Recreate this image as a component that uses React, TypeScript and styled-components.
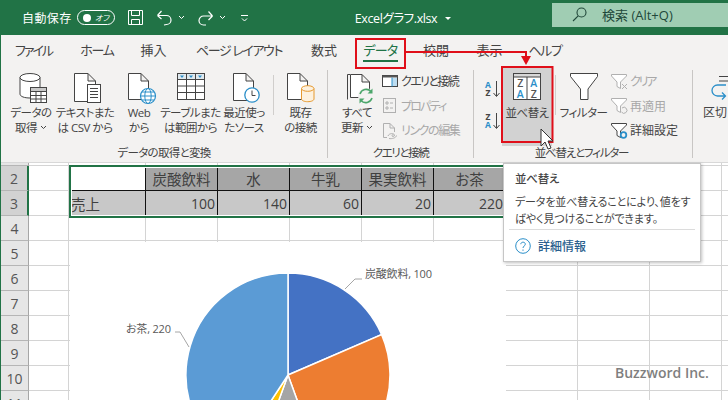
import React from "react";
import styled, { createGlobalStyle } from "styled-components";

const Global = createGlobalStyle`
  html, body { margin: 0; padding: 0; background: #fff; }
  #root { width: 728px; height: 400px; }
  * { box-sizing: border-box; }
`;

const font = `"Open Sans", "Noto Sans CJK JP", sans-serif`;

const Page = styled.div`
  position: relative;
  width: 728px;
  height: 400px;
  overflow: hidden;
  font-family: ${font};
  font-feature-settings: "palt";
  color: #444;
  background: #fff;
`;

/* ---------- title bar ---------- */
const TitleBar = styled.header`
  display: flex;
  align-items: center;
  height: 35px;
  background: #217346;
  color: #fff;
`;
const QuickAccess = styled.div`
  display: flex;
  align-items: center;
  width: 254px;
  padding-left: 22px;
  flex: none;
`;
const AutoSave = styled.span`
  font-size: 12px;
  width: 48px;
  white-space: nowrap;
  letter-spacing: 0.4px;
`;
const Toggle = styled.span`
  display: flex;
  align-items: center;
  justify-content: space-between;
  width: 38px;
  height: 15px;
  margin-left: 7px;
  padding: 0 5px 0 5px;
  border: 1px solid #fff;
  border-radius: 8px;
  font-size: 8px;
  font-style: italic;
  &::before {
    content: "";
    width: 8px;
    height: 8px;
    border-radius: 50%;
    background: #fff;
  }
`;
const QuickIcon = styled.svg<{ $gap: number }>`
  margin-left: ${(p) => p.$gap}px;
  flex: none;
  fill: none;
  stroke: #fff;
`;
const FileName = styled.div`
  flex: 1;
  display: flex;
  align-items: center;
  justify-content: center;
  gap: 8px;
  font-size: 12.5px;
  letter-spacing: -0.4px;
`;
const Caret = styled.span`
  border-left: 3px solid transparent;
  border-right: 3px solid transparent;
  border-top: 3px solid #fff;
  margin-top: 2px;
`;
const Search = styled.div`
  display: flex;
  align-items: center;
  width: 176px;
  height: 24px;
  margin-top: -6px;
  padding-left: 20px;
  background: #a0cdb3;
  color: #21483a;
  font-size: 13px;
  gap: 15px;
`;

/* ---------- tabs ---------- */
const Body = styled.div`
  border-left: 1px solid #217346;
`;
const Tabs = styled.nav`
  display: flex;
  height: 31px;
  background: #f3f2f1;
`;
const Tab = styled.div<{ $w: number; $track?: number }>`
  width: ${(p) => p.$w}px;
  text-align: center;
  padding-top: 7px;
  font-size: 13px;
  line-height: 16px;
  letter-spacing: ${(p) => p.$track ?? 0}px;
  color: #444;
  white-space: nowrap;
`;
const TabLabel = styled.span<{ $active?: boolean }>`
  display: inline-block;
  padding-bottom: 2px;
  border-bottom: 2px solid ${(p) => (p.$active ? "#217346" : "transparent")};
  ${(p) => (p.$active ? "color:#217346;" : "")}
`;

/* ---------- ribbon ---------- */
const Ribbon = styled.section`
  display: flex;
  height: 97px;
  background: #f3f2f1;
  border-bottom: 1px solid #d8d8d8;
`;
const Group = styled.div<{ $w: number }>`
  display: flex;
  flex-direction: column;
  flex: none;
  width: ${(p) => p.$w}px;
  overflow: hidden;
`;
const GroupDivider = styled.div`
  flex: none;
  width: 1px;
  height: 88px;
  margin-top: 4px;
  background: #c8c6c4;
`;
const Items = styled.div<{ $pad?: number }>`
  display: flex;
  height: 80px;
  flex: none;
  padding-left: ${(p) => p.$pad ?? 0}px;
`;
const GroupLabel = styled.div<{ $track: number; $shift?: number }>`
  text-align: center;
  font-size: 11.5px;
  line-height: 14px;
  letter-spacing: ${(p) => p.$track}px;
  padding-right: ${(p) => p.$shift ?? 0}px;
  color: #444;
  white-space: nowrap;
`;
const BigButton = styled.div<{ $w: number; $hot?: boolean }>`
  flex: none;
  width: ${(p) => p.$w}px;
  display: flex;
  flex-direction: column;
  align-items: center;
  padding-top: 6px;
  ${(p) => (p.$hot ? "background:#d2d2d2;" : "")}
`;
const BigIcon = styled.svg`
  width: 32px;
  height: 32px;
  flex: none;
  overflow: visible;
`;
const BigLabel = styled.div`
  margin-top: 1px;
  font-size: 11.5px;
  letter-spacing: -0.5px;
  line-height: 15px;
  text-align: center;
  white-space: nowrap;
`;
const Chevron = styled.svg`
  width: 7px;
  height: 5px;
  margin-left: 3px;
  fill: none;
  stroke: #444;
  vertical-align: 2px;
`;
const InnerDivider = styled.div<{ $left?: number }>`
  flex: none;
  width: 1px;
  height: 40px;
  margin-top: 9px;
  margin-left: ${(p) => p.$left ?? 0}px;
  background: #d0cecc;
`;
const SmallColumn = styled.div`
  display: flex;
  flex-direction: column;
  padding-top: 3px;
`;
const SmallRow = styled.div<{ $off?: boolean; $track?: number }>`
  display: flex;
  align-items: center;
  gap: 2px;
  height: 24.5px;
  font-size: 12px;
  letter-spacing: ${(p) => p.$track ?? 0}px;
  white-space: nowrap;
  color: ${(p) => (p.$off ? "#a8a8a8" : "#444")};
`;
const SmallIcon = styled.svg`
  width: 17px;
  height: 17px;
  flex: none;
  overflow: visible;
`;
const SortStack = styled.div`
  display: flex;
  flex-direction: column;
  width: 28px;
  padding: 14px 0 0 10px;
  gap: 14px;
  flex: none;
`;
const CutOffLabel = styled.div`
  margin-top: 1px;
  font-size: 12px;
  line-height: 15px;
  white-space: nowrap;
`;
const CutOffButton = styled.div`
  display: flex;
  flex-direction: column;
  width: 40px;
  padding-top: 6px;
`;

/* ---------- sheet ---------- */
const Sheet = styled.div`
  position: relative;
  display: grid;
  grid-template-columns: 28px 40px 77px repeat(9, 72px);
  grid-template-rows: 3px repeat(10, 25px);
  height: 237px;
  overflow: hidden;
  background: #fff;
`;
const RowHead = styled.div<{ $on?: boolean }>`
  display: flex;
  align-items: center;
  justify-content: center;
  font-size: 14px;
  color: #555;
  background: ${(p) => (p.$on ? "#d2d2d2" : "#e6e6e6")};
  border-bottom: 1px solid #b5b5b5;
  border-right: 1px solid ${(p) => (p.$on ? "#217346" : "#a6a6a6")};
  ${(p) => (p.$on ? "border-right-width:2px;" : "")}
`;
const toneBg = { plain: "#fff", head: "#a6a6a6", value: "#c8c8c8", corner: "#fff", label: "#c8c8c8" };
const Cell = styled.div<{ $tone: keyof typeof toneBg }>`
  display: flex;
  align-items: center;
  justify-content: ${(p) => (p.$tone === "head" ? "center" : p.$tone === "value" ? "flex-end" : "flex-start")};
  padding: 0 2px;
  overflow: hidden;
  font-size: ${(p) => (p.$tone === "value" ? 14 : 14.5)}px;
  white-space: nowrap;
  color: #404040;
  background: ${(p) => toneBg[p.$tone]};
  border-right: 1px solid ${(p) => (p.$tone === "plain" ? "#d4d4d4" : "#111")};
  border-bottom: 1px solid ${(p) => (p.$tone === "plain" ? "#d4d4d4" : "#111")};
`;
const Selection = styled.div`
  position: absolute;
  left: 68px;
  top: 2px;
  width: 440px;
  height: 53px;
  border: 2px solid #217346;
  box-shadow: inset 0 0 0 1px #fff;
  pointer-events: none;
`;
const Chart = styled.div`
  position: absolute;
  left: 69px;
  top: 79px;
  width: 436px;
  height: 170px;
  background: #fff;
`;
const ChartSvg = styled.svg`
  display: block;
  width: 436px;
  height: 170px;
`;
const Watermark = styled.div`
  position: absolute;
  left: 615px;
  top: 363px;
  font-size: 14px;
  line-height: 20px;
  color: #7f7f7f;
  font-weight: 600;
`;

/* ---------- tooltip ---------- */
const Tooltip = styled.aside`
  position: absolute;
  left: 503px;
  top: 163px;
  width: 198px;
  height: 99px;
  padding: 7px 5px 0;
  background: #fff;
  border: 1px solid #c6c6c6;
  box-shadow: 1px 1px 3px rgba(0, 0, 0, 0.25);
  color: #444;
`;
const TipTitle = styled.div`
  padding-left: 6px;
  font-size: 11.5px;
  line-height: 16px;
  letter-spacing: -0.3px;
  font-weight: 500;
`;
const TipText = styled.div`
  padding: 6px 6px 2px;
  font-size: 11px;
  line-height: 17px;
  letter-spacing: -0.15px;
  white-space: nowrap;
`;
const TipFoot = styled.div`
  display: flex;
  align-items: center;
  gap: 7px;
  padding: 7px 6px 0;
  border-top: 1px solid #dcdcdc;
  color: #2b5f8e;
  font-size: 12px;
  font-weight: 500;
`;

/* ---------- annotations ---------- */
const Overlay = styled.svg`
  position: absolute;
  left: 0;
  top: 0;
  width: 728px;
  height: 400px;
  pointer-events: none;
`;

/* ---------- icons ---------- */
const S = "#444";
const B = "#2b8fc9";

const Doc = ({ x, y, w, h }: { x: number; y: number; w: number; h: number }) => (
  <path
    d={`M${x + .5} ${y + .5}H${x + w - 8}L${x + w - .5} ${y + 8}V${y + h - .5}H${x + .5}ZM${x + w - 8} ${y + .5}V${y + 8}H${x + w - .5}`}
    fill="#fff"
    stroke={S}
  />
);

const GetDataIcon = () => (
  <BigIcon viewBox="0 0 32 32">
    <path d="M5 5.500V22c0 2.500 4.500 4 10 4s10-1.500 10-4V5.500" fill="#fff" stroke={S} />
    <ellipse cx="15" cy="5.500" rx="10" ry="4" fill="#fff" stroke={S} />
    <rect x="15.500" y="15.500" width="16" height="15" fill="#fff" stroke={S} />
    <path d="M15.500 19.500h16M15.500 23.500h16M15.500 27h16M21 19.500V30.500M26 19.500V30.500" stroke={S} fill="none" />
    <rect x="15.500" y="15.500" width="16" height="4" fill="#c9c9c9" stroke={S} />
  </BigIcon>
);
const TextCsvIcon = () => (
  <BigIcon viewBox="0 0 32 32">
    <Doc x={5} y={1} w={22} h={29} />
    <rect x="18.500" y="12.500" width="13" height="18" fill="#fff" stroke={S} />
    <path d="M21 16.500h8M21 19.500h8M21 22.500h8M21 25.500h8" stroke={S} fill="none" />
  </BigIcon>
);
const WebIcon = () => (
  <BigIcon viewBox="0 0 32 32">
    <Doc x={5} y={1} w={21} h={27} />
    <circle cx="25" cy="24" r="7.500" fill="#fff" stroke={B} strokeWidth="1.200" />
    <ellipse cx="25" cy="24" rx="3.200" ry="7.500" fill="none" stroke={B} />
    <path d="M17.500 24h15M18.800 20h12.400M18.800 28h12.400" stroke={B} fill="none" />
  </BigIcon>
);
const TableIcon = () => (
  <BigIcon viewBox="0 0 32 32">
    <rect x="2.500" y="1.500" width="27" height="26" fill="#fff" stroke={S} />
    <rect x="2.500" y="1.500" width="27" height="6" fill="#dfe9ef" stroke={S} />
    <path d="M2.500 14h27M2.500 20.500h27M11.500 1.500v26M20.500 1.500v26" stroke={S} fill="none" />
    <path d="M5 3.500h4L7 6zM14 3.500h4L16 6zM23 3.500h4L25 6z" fill={B} />
  </BigIcon>
);
const RecentIcon = () => (
  <BigIcon viewBox="0 0 32 32">
    <Doc x={5} y={1} w={21} h={28} />
    <circle cx="24" cy="23" r="7.200" fill="#fff" stroke={B} strokeWidth="1.300" />
    <path d="M24 18.500V23.500H27.500" fill="none" stroke={S} />
  </BigIcon>
);
const ExistingIcon = () => (
  <BigIcon viewBox="0 0 32 32">
    <Doc x={2} y={1} w={21} h={27} />
    <path d="M16.500 16.500V27c0 1.500 2.700 2.700 6.200 2.700s6.300-1.200 6.300-2.700V16.500" fill="#fdf1de" stroke="#e6992f" />
    <ellipse cx="22.700" cy="16.500" rx="6.200" ry="2.800" fill="#fdf1de" stroke="#e6992f" />
  </BigIcon>
);
const RefreshIcon = () => (
  <BigIcon viewBox="0 0 32 32">
    <path d="M6.500 27.500V2.500H9" fill="none" stroke={S} />
    <Doc x={9} y={2} w={20} h={24} />
    <circle cx="25" cy="24" r="8" fill="#f3f2f1" />
    <path d="M19 22a6.500 6.500 0 0 1 11-2.500M31 26a6.500 6.500 0 0 1-11 2.500" fill="none" stroke="#4ca66b" strokeWidth="1.600" />
    <path d="M31.500 16.500v5h-5zM18.500 31.500v-5h5z" fill="#4ca66b" />
  </BigIcon>
);
const SortIcon = () => (
  <BigIcon viewBox="0 0 32 32">
    <rect x="2.500" y="1.500" width="27" height="26" fill="#fff" stroke={S} />
    <rect x="2.500" y="1.500" width="27" height="3.500" fill="#d8d8d8" stroke={S} />
    <path d="M16 5v22.500" stroke={S} />
    <g fontSize="10.500" fontWeight="600" textAnchor="middle" fontFamily="Open Sans, sans-serif">
      <text x="9.300" y="15" fill="#555">Z</text>
      <text x="9.300" y="25.500" fill={B}>A</text>
      <text x="22.700" y="15" fill={B}>A</text>
      <text x="22.700" y="25.500" fill="#555">Z</text>
    </g>
  </BigIcon>
);
const FilterIcon = () => (
  <BigIcon viewBox="0 0 32 32">
    <path d="M2.500 1.500H29.500V4.500L20 17V27.500H12.500V17L2.500 4.500Z" fill="#fff" stroke={S} />
  </BigIcon>
);
const SortMini = ({ top, bottom }: { top: string; bottom: string }) => (
  <svg width="18" height="18" viewBox="0 0 18 18" style={{ overflow: "visible" }}>
    <g fontSize="8.500" fontWeight="700" textAnchor="middle" fontFamily="Open Sans, sans-serif">
      <text x="4" y="7.500" fill={top === "A" ? B : "#444"}>{top}</text>
      <text x="4" y="16" fill={bottom === "A" ? B : "#444"}>{bottom}</text>
    </g>
    <path d="M12.500 1V16M9.500 13l3 3.500 3-3.500" fill="none" stroke="#444" />
  </svg>
);
const QueryIcon = () => (
  <SmallIcon viewBox="0 0 17 17">
    <rect x="0.500" y="2.500" width="15" height="11" fill="#fff" stroke={S} />
    <path d="M.500 2.500h15v2h-15z" fill="#555" />
    <rect x="10" y="5" width="5" height="8" fill="#bcdcf0" />
    <path d="M10 4.500V13.500" stroke={B} />
  </SmallIcon>
);
const PropsIcon = () => (
  <SmallIcon viewBox="0 0 17 17">
    <rect x="1.500" y="1.500" width="12" height="14" fill="none" stroke="#b0b0b0" />
    <path d="M4 5h2v2H4zM4 10h2v2H4zM8 6h3M8 11h3" fill="none" stroke="#b0b0b0" />
  </SmallIcon>
);
const LinkIcon = () => (
  <SmallIcon viewBox="0 0 17 17">
    <path d="M1.500 1.500H8L12.500 6V10M1.500 1.500V15.500H5M8 1.500V6H12.500" fill="none" stroke="#b0b0b0" />
    <path d="M6 14c1-3 6-3 6.500-1 .3 1.500-2 2-2.500 1s1-1.500 1.500-1" fill="none" stroke="#b0b0b0" />
    <path d="M7 16.500c3 .5 7-.5 7.500-3" fill="none" stroke="#b0b0b0" />
  </SmallIcon>
);
const MiniFunnel = ({ color, badge }: { color: string; badge?: React.ReactNode }) => (
  <SmallIcon viewBox="0 0 17 17">
    <path d="M.5 1.500H15.500V3L9.500 9V15.500L6 13.500V9L.5 3Z" fill="#fff" stroke={color} />
    {badge}
  </SmallIcon>
);

const rows = [2, 3, 4, 5, 6, 7, 8, 9, 10, 11];
const columns = 11;

const polar = (deg: number, r = 102) => {
  const a = ((deg - 90) * Math.PI) / 180;
  return [218 + r * Math.cos(a), 133 + r * Math.sin(a)];
};
const slices = [
  { v: 100, c: "#4472c4" },
  { v: 140, c: "#ed7d31" },
  { v: 60, c: "#a5a5a5" },
  { v: 20, c: "#ffc000" },
  { v: 220, c: "#5b9bd5" },
];
let acc = 0;
const pie = slices.map((s) => {
  const from = (acc / 540) * 360;
  acc += s.v;
  const to = (acc / 540) * 360;
  const [x1, y1] = polar(from);
  const [x2, y2] = polar(to);
  return { d: `M218 133L${x1} ${y1}A102 102 0 ${to - from > 180 ? 1 : 0} 1 ${x2} ${y2}Z`, c: s.c };
});

const cellFor = (row: number, col: number) => {
  if (row === 2) {
    const heads = ["炭酸飲料", "水", "牛乳", "果実飲料", "お茶"];
    if (col === 2) return { tone: "corner" as const, text: "" };
    if (col >= 3 && col <= 7) return { tone: "head" as const, text: heads[col - 3] };
  }
  if (row === 3) {
    const vals = ["100", "140", "60", "20", "220"];
    if (col === 2) return { tone: "label" as const, text: "売上" };
    if (col >= 3 && col <= 7) return { tone: "value" as const, text: vals[col - 3] };
  }
  return { tone: "plain" as const, text: "" };
};

export default function App() {
  return (
    <Page>
      <Global />
      <TitleBar>
        <QuickAccess>
          <AutoSave>自動保存</AutoSave>
          <Toggle>オフ</Toggle>
          <QuickIcon $gap={12} width="17" height="17" viewBox="0 0 17 17">
            <path d="M1.500 1.500H15.500V15.500H1.500ZM4.500 1.500V6.500H12.500V1.500M4.500 15.500V10.500H12.500V15.500" />
          </QuickIcon>
          <QuickIcon $gap={12} width="17" height="17" viewBox="0 0 17 17" strokeWidth="1.200">
            <path d="M2 6.500H10.500A4.500 4.500 0 0 1 10.500 15.500L8 16M1.500 6.500L5.500 2M1.500 6.500L5.500 10" />
          </QuickIcon>
          <QuickIcon $gap={5} width="7" height="5" viewBox="0 0 7 5">
            <path d="M1 1l2.500 2.500L6 1" />
          </QuickIcon>
          <QuickIcon $gap={12} width="17" height="17" viewBox="0 0 17 17" strokeWidth="1.200">
            <path d="M15 7H6.500A4.500 4.500 0 0 0 6.500 16L9 16M15.500 7L11.500 2.500M15.500 7L11.500 11" />
          </QuickIcon>
          <QuickIcon $gap={5} width="7" height="5" viewBox="0 0 7 5">
            <path d="M1 1l2.500 2.500L6 1" />
          </QuickIcon>
          <QuickIcon $gap={15} width="7" height="8" viewBox="0 0 7 8">
            <path d="M0 1.500H7M1 4.500l2.500 2.500L6 4.500" />
          </QuickIcon>
        </QuickAccess>
        <FileName>
          Excelグラフ.xlsx
          <Caret />
        </FileName>
        <Search>
          <svg width="15" height="15" viewBox="0 0 15 15" fill="none" stroke="#21483a" strokeWidth="1.100">
            <circle cx="9.500" cy="5.500" r="4.500" />
            <path d="M6.200 8.800L1 14" />
          </svg>
          検索 (Alt+Q)
        </Search>
      </TitleBar>
      <Body>
        <Tabs>
          <Tab $w={65} $track={-2}><TabLabel>ファイル</TabLabel></Tab>
          <Tab $w={62} $track={-1.3}><TabLabel>ホーム</TabLabel></Tab>
          <Tab $w={51}><TabLabel>挿入</TabLabel></Tab>
          <Tab $w={120} $track={-1.4}><TabLabel>ページ レイアウト</TabLabel></Tab>
          <Tab $w={50}><TabLabel>数式</TabLabel></Tab>
          <Tab $w={63} $track={-0.7}><TabLabel $active>データ</TabLabel></Tab>
          <Tab $w={48}><TabLabel>校閲</TabLabel></Tab>
          <Tab $w={59}><TabLabel>表示</TabLabel></Tab>
          <Tab $w={52} $track={-1.3}><TabLabel>ヘルプ</TabLabel></Tab>
        </Tabs>
        <Ribbon>
          <Group $w={326}>
            <Items $pad={3}>
              <BigButton $w={54}><GetDataIcon /><BigLabel>データの<br />取得<Chevron viewBox="0 0 7 5"><path d="M1 1l2.500 2.500L6 1" /></Chevron></BigLabel></BigButton>
              <BigButton $w={54}><TextCsvIcon /><BigLabel>テキストまた<br />は CSV から</BigLabel></BigButton>
              <BigButton $w={54}><WebIcon /><BigLabel>Web<br />から</BigLabel></BigButton>
              <BigButton $w={49}><TableIcon /><BigLabel>テーブルまた<br />は範囲から</BigLabel></BigButton>
              <BigButton $w={58}><RecentIcon /><BigLabel>最近使っ<br />たソース</BigLabel></BigButton>
              <InnerDivider />
              <BigButton $w={53}><ExistingIcon /><BigLabel>既存<br />の接続</BigLabel></BigButton>
            </Items>
            <GroupLabel $track={-0.7}>データの取得と変換</GroupLabel>
          </Group>
          <GroupDivider />
          <Group $w={145}>
            <Items $pad={4}>
              <BigButton $w={50}><RefreshIcon /><BigLabel>すべて<br />更新<Chevron viewBox="0 0 7 5"><path d="M1 1l2.500 2.500L6 1" /></Chevron></BigLabel></BigButton>
              <SmallColumn>
                <SmallRow $track={-1.6}><QueryIcon />クエリと接続</SmallRow>
                <SmallRow $off $track={-1.8}><PropsIcon />プロパティ</SmallRow>
                <SmallRow $off $track={-1.4}><LinkIcon />リンクの編集</SmallRow>
              </SmallColumn>
            </Items>
            <GroupLabel $track={-1.4}>クエリと接続</GroupLabel>
          </Group>
          <GroupDivider />
          <Group $w={218}>
            <Items>
              <SortStack>
                <SortMini top="A" bottom="Z" />
                <SortMini top="Z" bottom="A" />
              </SortStack>
              <BigButton $w={50} $hot><SortIcon /><BigLabel>並べ替え</BigLabel></BigButton>
              <InnerDivider $left={3} />
              <BigButton $w={55}><FilterIcon /><BigLabel>フィルター</BigLabel></BigButton>
              <SmallColumn>
                <SmallRow $off $track={-2.2}><MiniFunnel color="#b0b0b0" badge={<path d="M11 11l5 5M16 11l-5 5" stroke="#b0b0b0" />} />クリア</SmallRow>
                <SmallRow $off><MiniFunnel color="#b0b0b0" badge={<path d="M11 11a3 3 0 1 1-.5 4" fill="none" stroke="#b0b0b0" />} />再適用</SmallRow>
                <SmallRow><MiniFunnel color="#444" badge={<circle cx="12.500" cy="13" r="2.800" fill="none" stroke={B} strokeWidth="1.800" />} />詳細設定</SmallRow>
              </SmallColumn>
            </Items>
            <GroupLabel $track={-1.2} $shift={3}>並べ替えとフィルター</GroupLabel>
          </Group>
          <GroupDivider />
          <Group $w={36}>
            <Items $pad={10}>
              <CutOffButton>
                <svg width="32" height="32" viewBox="0 0 32 32" fill="none" stroke={B}>
                  <path d="M16 4.500H32M16 9H32" stroke="#444" />
                  <path d="M23 13H14.500A5.500 5.500 0 0 0 14.500 24H22M19 20.500L22.500 24 19 27.500" strokeWidth="1.300" />
                </svg>
                <CutOffLabel>区切り</CutOffLabel>
              </CutOffButton>
            </Items>
          </Group>
        </Ribbon>
        <Sheet>
          <RowHead />
          {Array.from({ length: columns }, (_, c) => (
            <Cell key={c} $tone="plain" />
          ))}
          {rows.map((r) => (
            <React.Fragment key={r}>
              <RowHead $on={r === 2 || r === 3}>{r}</RowHead>
              {Array.from({ length: columns }, (_, c) => {
                const info = cellFor(r, c + 1);
                return <Cell key={c} $tone={info.tone}>{info.text}</Cell>;
              })}
            </React.Fragment>
          ))}
          <Selection />
          <Chart>
            <ChartSvg viewBox="0 0 436 170">
              {pie.map((p) => (
                <path key={p.c} d={p.d} fill={p.c} stroke="#fff" strokeWidth="1.500" />
              ))}
              <path d="M275 47L285 37H292M119 105L110 90H105" fill="none" stroke="#a6a6a6" />
              <g fontSize="11" fill="#595959" fontFamily={font} letterSpacing="-0.2">
                <text x="295" y="36">炭酸飲料, 100</text>
                <text x="56" y="91">お茶, 220</text>
              </g>
            </ChartSvg>
          </Chart>
        </Sheet>
      </Body>
      <Watermark>Buzzword Inc.</Watermark>
      <Tooltip>
        <TipTitle>並べ替え</TipTitle>
        <TipText>データを並べ替えることにより、値をす<br />ばやく見つけることができます。</TipText>
        <TipFoot>
          <svg width="16" height="16" viewBox="0 0 16 16" fill="none" stroke="#2b8fc9">
            <circle cx="8" cy="8" r="7.300" />
            <path d="M5.800 6.200C5.800 3.500 10.300 3.500 10.300 6.200 10.300 8 8 8 8 10" />
            <path d="M8 11.500V12.800" />
          </svg>
          詳細情報
        </TipFoot>
      </Tooltip>
      <Overlay viewBox="0 0 728 400">
        <g fill="none" stroke="#e00f1a" strokeWidth="2">
          <rect x="356" y="39" width="49" height="29" />
          <rect x="502" y="67" width="50.500" height="75" />
          <path d="M405 52H526V57" />
        </g>
        <path d="M521 56H531L526 65Z" fill="#e00f1a" />
        <path d="M541 129V146L545 142L548 149L551 148L548 141H553Z" fill="#fff" stroke="#333" />
      </Overlay>
    </Page>
  );
}
